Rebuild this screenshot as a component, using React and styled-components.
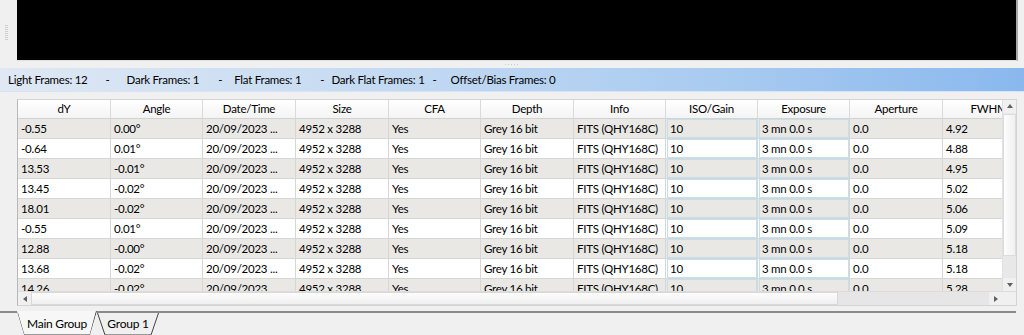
import React from "react";
import styled, { createGlobalStyle } from "styled-components";

const GlobalStyle = createGlobalStyle`
  html, body { margin: 0; padding: 0; background: #f0f0f0; }
  body {
    font-family: "Segoe UI", Lato, "Liberation Sans", sans-serif;
    font-size: 11.5px;
    letter-spacing: -0.25px;
    color: #000;
  }
`;

const columns = [
  { title: "dY", width: 93 },
  { title: "Angle", width: 92 },
  { title: "Date/Time", width: 93 },
  { title: "Size", width: 93 },
  { title: "CFA", width: 92 },
  { title: "Depth", width: 93 },
  { title: "Info", width: 92 },
  { title: "ISO/Gain", width: 92, edit: true },
  { title: "Exposure", width: 92, edit: true },
  { title: "Aperture", width: 93 },
  { title: "FWHM", width: 93 },
];

const rows = [
  ["-0.55", "0.00°", "4.92"],
  ["-0.64", "0.01°", "4.88"],
  ["13.53", "-0.01°", "4.95"],
  ["13.45", "-0.02°", "5.02"],
  ["18.01", "-0.02°", "5.06"],
  ["-0.55", "0.01°", "5.09"],
  ["12.88", "-0.00°", "5.18"],
  ["13.68", "-0.02°", "5.18"],
  ["14.26", "-0.02°", "5.28"],
];

const counts = [
  { text: "Light Frames: 12", before: 0 },
  { text: "-", before: 18 },
  { text: "Dark Frames: 1", before: 17 },
  { text: "-", before: 19 },
  { text: "Flat Frames: 1", before: 12 },
  { text: "-", before: 19 },
  { text: "Dark Flat Frames: 1", before: 7 },
  { text: "-", before: 8 },
  { text: "Offset/Bias Frames: 0", before: 14 },
];

export default function App() {
  return (
    <Window>
      <GlobalStyle />
      <TopPane>
        <Grip><GripDots /></Grip>
        <Viewer />
      </TopPane>
      <Splitter><SplitDots /></Splitter>
      <StatusBar>
        {counts.map((c, i) => (
          <StatusItem key={i} before={c.before}>{c.text}</StatusItem>
        ))}
      </StatusBar>

      <TableFrame>
        <TableMain>
          <Viewport>
            <HeaderRow>
              {columns.map((c) => (
                <HeaderCell key={c.title} w={c.width}>{c.title}</HeaderCell>
              ))}
            </HeaderRow>
            {rows.map((r, i) => {
              const values = [r[0], r[1], "20/09/2023 ...", "4952 x 3288", "Yes", "Grey 16 bit", "FITS (QHY168C)", "10", "3 mn 0.0 s", "0.0", r[2]];
              return (
                <Row key={i} alt={i % 2 === 0}>
                  {columns.map((c, j) => (
                    <Cell key={j} w={c.width}>
                      {c.edit ? <EditBox>{values[j]}</EditBox> : <CellText>{values[j]}</CellText>}
                    </Cell>
                  ))}
                </Row>
              );
            })}
          </Viewport>
          <VScroll>
            <ArrowButton><Triangle dir="up" /></ArrowButton>
            <VTrack><VThumb /></VTrack>
            <ArrowButton><Triangle dir="down" /></ArrowButton>
          </VScroll>
        </TableMain>
        <HScroll>
          <ArrowButton><Triangle dir="left" /></ArrowButton>
          <HThumb />
          <HTrack />
          <ArrowButton><Triangle dir="right" /></ArrowButton>
          <Corner />
        </HScroll>
      </TableFrame>

      <TabBar>
        <Tab active>
          <TabOutline viewBox="0 0 80 24" preserveAspectRatio="none">
            <polyline points="0.5,2 7,24 73,24 79.5,0" fill="none" stroke="#3c3c3c" strokeWidth="1" />
          </TabOutline>
          Main Group
        </Tab>
        <Tab>
          <TabOutline viewBox="0 0 62 24" preserveAspectRatio="none">
            <polyline points="0.5,0 8,24 54,24 61.5,0" fill="none" stroke="#3c3c3c" strokeWidth="1" />
          </TabOutline>
          Group 1
        </Tab>
      </TabBar>
    </Window>
  );
}

const Window = styled.div`
  width: 1024px;
  height: 335px;
  overflow: hidden;
  display: flex;
  flex-direction: column;
  background: #f0f0f0;
`;

const TopPane = styled.div`
  display: flex;
  height: 61px;
  padding-right: 6px;
`;

const Grip = styled.div`
  width: 17px;
  display: flex;
  align-items: center;
`;

const GripDots = styled.div`
  width: 3px;
  height: 15px;
  margin-left: 5px;
  margin-top: 4px;
  background: repeating-linear-gradient(to bottom, #cfcfcf 0 1px, transparent 1px 2px);
`;

const Viewer = styled.div`
  flex: 1;
  background: #000;
  border-right: 2px solid #a8a8a8;
  border-bottom: 1px solid #e0e0e0;
`;

const Splitter = styled.div`
  height: 7px;
  display: flex;
  align-items: center;
  justify-content: center;
`;

const SplitDots = styled.div`
  width: 15px;
  height: 1px;
  background: repeating-linear-gradient(to right, #c8c8c8 0 1px, transparent 1px 3px);
`;

const StatusBar = styled.div`
  height: 23px;
  display: flex;
  align-items: center;
  padding-left: 8px;
  background: linear-gradient(to right, #dfe8f4 0%, #c6dbf3 35%, #a9cbf0 70%, #8ab8ee 100%);
  border-bottom: 1px solid #d6e4f5;
  white-space: pre;
`;

const StatusItem = styled.span`
  margin-left: ${(p) => p.before}px;
`;

const TableFrame = styled.div`
  margin: 7px 7px 0 17px;
  height: 207px;
  border: 1px solid #d4d4d4;
  border-left-color: #b8b8b8;
  background: #fff;
  display: flex;
  flex-direction: column;
  box-sizing: border-box;
`;

const TableMain = styled.div`
  flex: 1;
  display: flex;
  min-height: 0;
`;

const Viewport = styled.div`
  flex: 1;
  overflow: hidden;
  background: #fff;
`;

const HeaderRow = styled.div`
  display: flex;
  height: 19px;
`;

const HeaderCell = styled.div`
  flex: 0 0 ${(p) => p.w}px;
  box-sizing: border-box;
  line-height: 18px;
  text-align: center;
  white-space: nowrap;
  overflow: hidden;
  background: linear-gradient(to bottom, #ffffff, #f4f4f4);
  border-right: 1px solid #dadada;
  border-bottom: 1px solid #d2d2d2;
`;

const Row = styled.div`
  display: flex;
  height: 20px;
  background: ${(p) => (p.alt ? "#e9e8e5" : "#ffffff")};
`;

const Cell = styled.div`
  flex: 0 0 ${(p) => p.w}px;
  box-sizing: border-box;
  border-right: 1px solid #d6d6d6;
  border-bottom: 1px solid #d6d6d6;
  overflow: hidden;
  display: flex;
`;

const CellText = styled.span`
  padding-left: 3px;
  line-height: 19px;
  white-space: nowrap;
`;

const EditBox = styled.span`
  flex: 1;
  margin: 0 0 0 1px;
  padding-left: 2px;
  border: 1px solid #c4e0ea;
  line-height: 17px;
  white-space: nowrap;
`;

const VScroll = styled.div`
  width: 13px;
  display: flex;
  flex-direction: column;
  background: #e8e8e8;
  border-left: 1px solid #e0e0e0;
`;

const ArrowButton = styled.div`
  flex: 0 0 13px;
  height: 13px;
  display: flex;
  align-items: center;
  justify-content: center;
  background: #f0f0f0;
`;

const Triangle = styled.div`
  width: 0;
  height: 0;
  border: 3px solid transparent;
  ${(p) => p.dir === "up" && "border-bottom: 4px solid #606060; border-top-width: 0; margin-top: -1px;"}
  ${(p) => p.dir === "down" && "border-top: 4px solid #606060; border-bottom-width: 0;"}
  ${(p) => p.dir === "left" && "border-right: 4px solid #606060; border-left-width: 0;"}
  ${(p) => p.dir === "right" && "border-left: 4px solid #606060; border-right-width: 0;"}
`;

const VTrack = styled.div`
  flex: 1;
  display: flex;
  flex-direction: column;
`;

const VThumb = styled.div`
  height: 140px;
  margin-top: 1px;
  background: linear-gradient(to right, #fdfdfd, #f0f0f0);
  border: 1px solid #dcdcdc;
`;

const HScroll = styled.div`
  height: 13px;
  display: flex;
  background: #e6e6e6;
  border-top: 1px solid #dcdcdc;
`;

const HThumb = styled.div`
  width: 807px;
  box-sizing: border-box;
  background: linear-gradient(to bottom, #fdfdfd, #efefef);
  border: 1px solid #d8d8d8;
`;

const HTrack = styled.div`
  flex: 1;
`;

const Corner = styled.div`
  width: 14px;
  background: #f0f0f0;
`;

const TabBar = styled.div`
  margin-top: 5px;
  margin-right: 8px;
  border-top: 2px solid #8a8a8a;
  display: flex;
  padding-left: 17px;
  height: 22px;
`;

const Tab = styled.div`
  position: relative;
  width: ${(p) => (p.active ? 80 : 62)}px;
  margin-top: ${(p) => (p.active ? -2 : 0)}px;
  padding-top: ${(p) => (p.active ? 5 : 3)}px;
  box-sizing: border-box;
  text-align: center;
  background: ${(p) => (p.active ? "#f7f7f7" : "transparent")};
  clip-path: ${(p) => (p.active ? "polygon(0 0, 100% 0, 91% 100%, 9% 100%)" : "none")};
  line-height: 16px;
  font-size: 12px;
`;

const TabOutline = styled.svg`
  position: absolute;
  left: 0;
  top: 0;
  width: 100%;
  height: 100%;
  overflow: visible;
`;
